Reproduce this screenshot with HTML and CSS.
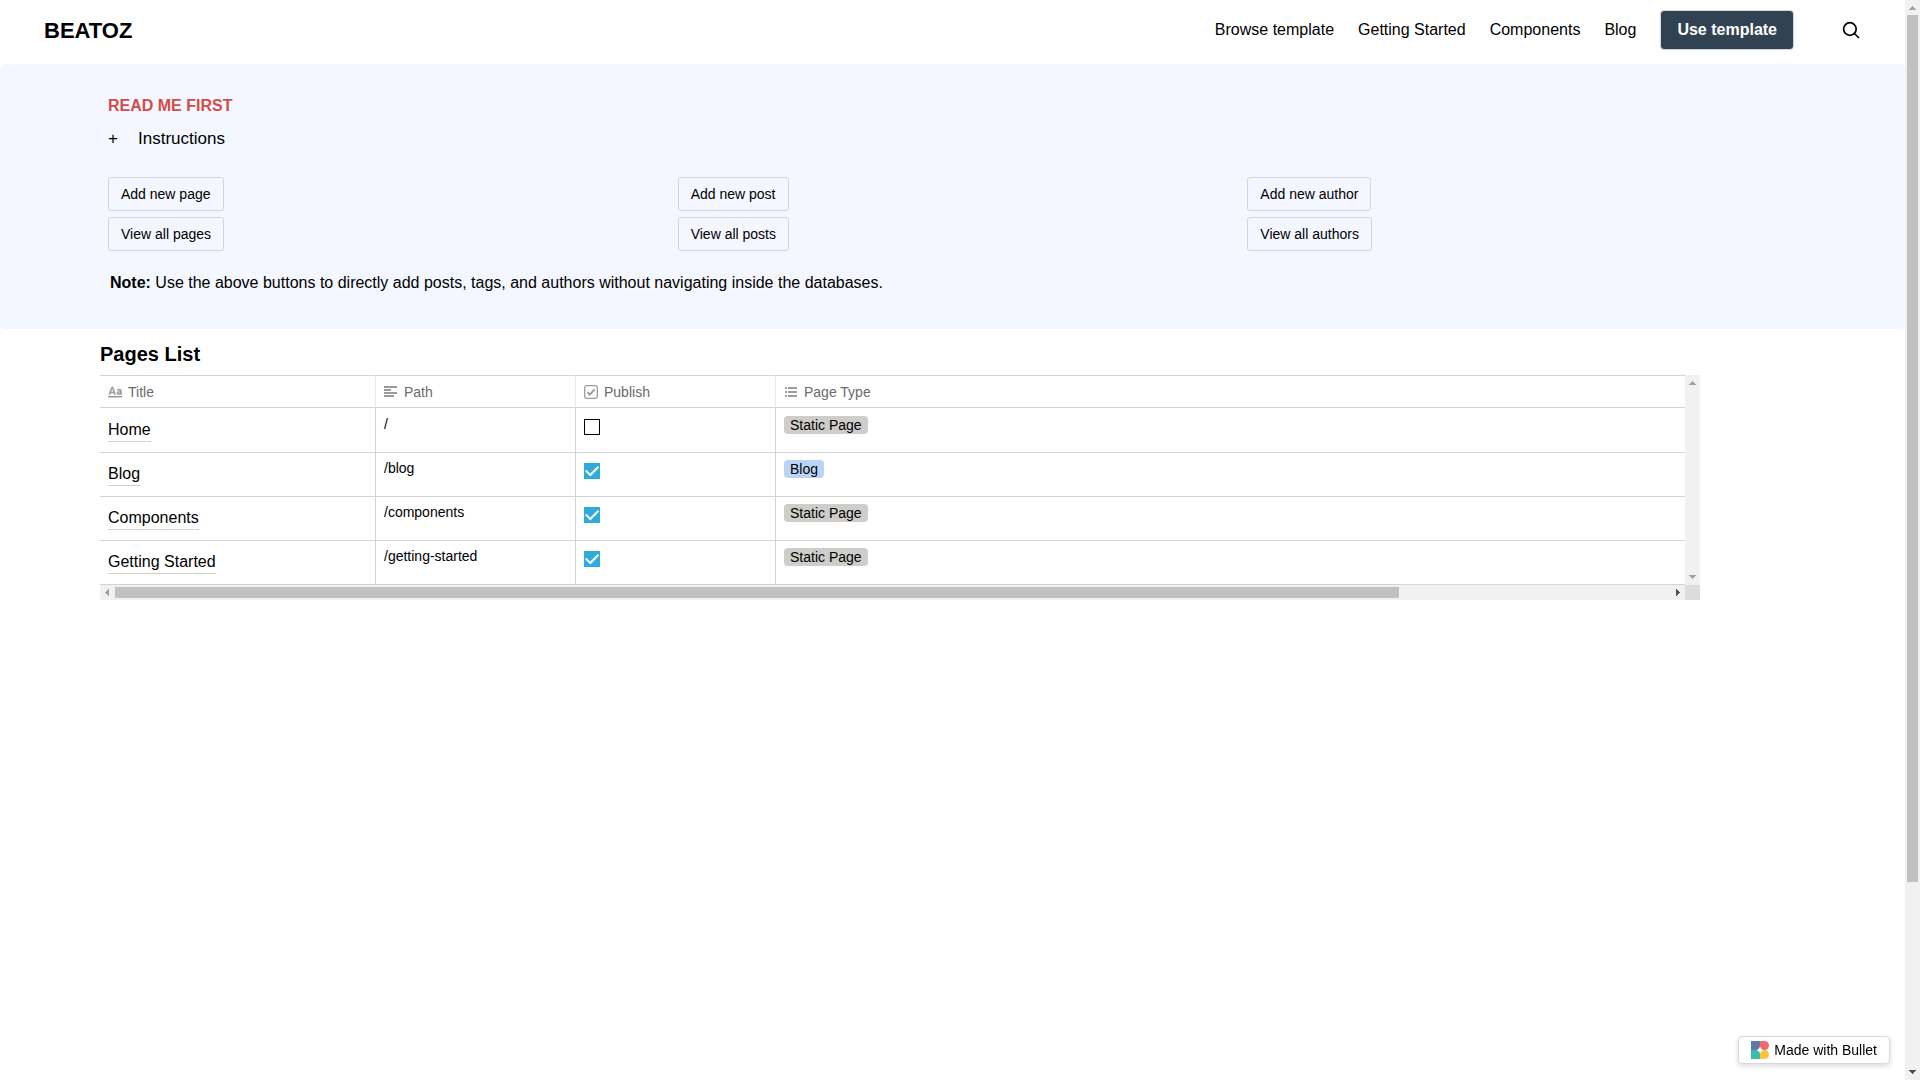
FILE: index.html
```html
<!DOCTYPE html>
<html lang="en">
<head>
<meta charset="utf-8">
<meta name="viewport" content="width=device-width, initial-scale=1">
<title>BEATOZ</title>
<link rel="stylesheet" href="styles.css">
</head>
<body>
<div class="page">
  <header class="site-header">
    <a class="brand" href="#">BEATOZ</a>
    <nav class="nav">
      <a href="#">Browse template</a>
      <a href="#">Getting Started</a>
      <a href="#">Components</a>
      <a href="#">Blog</a>
      <button class="cta" type="button">Use template</button>
      <button class="search" type="button" aria-label="Search">
        <svg width="18" height="18" viewBox="0 0 18 18" fill="none" stroke="currentColor" stroke-width="1.7"><circle cx="7.9" cy="8" r="6.3"/><path d="M12.4 12.5 17 17"/></svg>
      </button>
    </nav>
  </header>

  <main>
    <section class="hero">
      <h2 class="hero-title">READ ME FIRST</h2>
      <button class="toggle" type="button" aria-expanded="false"><span class="toggle-sign">+</span><span>Instructions</span></button>
      <div class="actions">
        <div class="action-group">
          <button class="btn" type="button">Add new page</button>
          <button class="btn" type="button">View all pages</button>
        </div>
        <div class="action-group">
          <button class="btn" type="button">Add new post</button>
          <button class="btn" type="button">View all posts</button>
        </div>
        <div class="action-group">
          <button class="btn" type="button">Add new author</button>
          <button class="btn" type="button">View all authors</button>
        </div>
      </div>
      <p class="note"><strong>Note:</strong> Use the above buttons to directly add posts, tags, and authors without navigating inside the databases.</p>
    </section>

    <section class="pages">
      <h2 class="pages-title">Pages List</h2>
      <div class="table-frame">
        <div class="table-view">
          <table class="pages-table">
            <colgroup><col class="col-title"><col class="col-path"><col class="col-publish"><col class="col-type"></colgroup>
            <thead>
              <tr>
                <th scope="col"><span class="head"><svg viewBox="0 0 14 14"><path stroke="currentColor" stroke-width=".6" d="M7.340 8.697a.81.81 0 0 0 .073.308.894.894 0 0 1 .066.232c0 .253-.224.484-.55.484-.299 0-.478-.138-.617-.577l-.37-1.090H2.573l-.377 1.083c-.144.444-.32.584-.62.584-.326 0-.547-.22-.547-.484 0-.076.016-.16.06-.274L3.370 2.460c.17-.46.46-.68.9-.68.44 0 .73.22.9.68zM2.900 7.100h2.700L4.270 3.100zM10.800 9.750c1 0 1.500-.6 1.600-.9v.3c0 .4.2.6.55.6.35 0 .55-.2.55-.6V6c0-1.200-.8-1.900-2.200-1.900-1 0-1.800.4-2.050 1-.2.5.1.75.4.75.7 0 .5-.85 1.600-.85.7 0 1.100.35 1.100 1v.4l-1.400.1c-1.300.1-2 .7-2 1.600 0 1 .75 1.650 1.850 1.650zm.3-.9c-.6 0-1-.3-1-.75s.35-.75 1-.8l1.250-.1v.4c0 .7-.55 1.250-1.250 1.250z"/><path d="M0 11h14v1.500H0z"/></svg>Title</span></th>
                <th scope="col"><span class="head"><svg viewBox="0 0 14 14"><path d="M0 1h13v2H0zM0 4h7v2H0zM0 7h13v2H0zM0 10h10v2H0z"/></svg>Path</span></th>
                <th scope="col"><span class="head"><svg viewBox="0 0 14 14"><rect x=".7" y=".7" width="12.6" height="12.6" rx="1.8" fill="none" stroke="currentColor" stroke-width="1.3"/><path d="m3.500 7.200 2.300 2.400 4.800-5.200" fill="none" stroke="currentColor" stroke-width="2"/></svg>Publish</span></th>
                <th scope="col"><span class="head"><svg viewBox="0 0 14 14"><path d="M1 2h2v2H1zM4 2h9v2H4zM1 6h2v2H1zM4 6h9v2H4zM1 10h2v2H1zM4 10h9v2H4z"/></svg>Page Type</span></th>
              </tr>
            </thead>
            <tbody>
              <tr>
                <td><a class="page-link" href="#">Home</a></td>
                <td>/</td>
                <td><input class="tick" type="checkbox" aria-label="Publish Home"></td>
                <td><span class="tag">Static Page</span></td>
              </tr>
              <tr>
                <td><a class="page-link" href="#">Blog</a></td>
                <td>/blog</td>
                <td><input class="tick" type="checkbox" aria-label="Publish Blog" checked></td>
                <td><span class="tag tag-blue">Blog</span></td>
              </tr>
              <tr>
                <td><a class="page-link" href="#">Components</a></td>
                <td>/components</td>
                <td><input class="tick" type="checkbox" aria-label="Publish Components" checked></td>
                <td><span class="tag">Static Page</span></td>
              </tr>
              <tr>
                <td><a class="page-link" href="#">Getting Started</a></td>
                <td>/getting-started</td>
                <td><input class="tick" type="checkbox" aria-label="Publish Getting Started" checked></td>
                <td><span class="tag">Static Page</span></td>
              </tr>
            </tbody>
          </table>
        </div>
        <div class="scrollbar scrollbar-y" aria-hidden="true">
          <svg class="arrow" viewBox="0 0 15 15"><path d="M4 10h7L7.500 6z"/></svg>
          <div class="track"></div>
          <svg class="arrow" viewBox="0 0 15 15"><path d="M4 5h7L7.500 9z"/></svg>
        </div>
        <div class="scrollbar scrollbar-x" aria-hidden="true">
          <svg class="arrow" viewBox="0 0 15 15"><path d="M9 4v7L5 7.500z"/></svg>
          <div class="track"><div class="thumb"></div></div>
          <svg class="arrow arrow-active" viewBox="0 0 15 15"><path d="M6 4v7l4-3.500z"/></svg>
        </div>
        <div class="scrollbar-corner"></div>
      </div>
    </section>
  </main>
</div>

<div class="scrollbar scrollbar-y" aria-hidden="true">
  <svg class="arrow" viewBox="0 0 15 15"><path d="M4 10h7L7.500 6z"/></svg>
  <div class="track"><div class="thumb"></div></div>
  <svg class="arrow arrow-active" viewBox="0 0 15 15"><path d="M4 5h7L7.500 9z"/></svg>
</div>

<a class="badge" href="#">
  <svg width="18" height="18" viewBox="0 0 18 18"><path fill="#5f77a9" d="M0 0h9v9H0z"/><path fill="#ef6a6c" d="M9 0h4.500a4.500 4.500 0 0 1 0 9H9z"/><path fill="#3bbdae" d="M0 9h9v9H0z"/><path fill="#fbc540" d="M9 9h4.500a4.500 4.500 0 0 1 0 9H9z"/><path fill="#fff" d="M9 5.500Q9.700 8.300 12.500 9 9.700 9.700 9 12.500 8.300 9.700 5.500 9 8.300 8.300 9 5.500z"/></svg>
  Made with Bullet
</a>
</body>
</html>
```
FILE: styles.css
```css
* { box-sizing: border-box; }

body {
  display: flex;
  height: 100vh;
  margin: 0;
  background: #fff;
  color: #000;
  font: 16px/24px "Liberation Sans", Arial, sans-serif;
}

button { font: inherit; color: inherit; background: none; border: 0; padding: 0; cursor: pointer; }
a { color: inherit; text-decoration: none; }
h2, p { margin: 0; }

.page {
  flex: 1;
  min-width: 0;
  overflow-x: hidden;
  overflow-y: auto;
}

/* Header */
.site-header {
  display: flex;
  align-items: center;
  justify-content: space-between;
  height: 64px;
  padding: 0 45px 4px 44px;
}
.brand { padding-top: 2px; font-size: 22px; font-weight: 700; }
.nav { display: flex; align-items: center; gap: 24px; }
.cta {
  height: 40px;
  padding: 0 16px;
  border: 1px solid #d5dadf;
  border-radius: 4px;
  background: #314252;
  color: #fff;
  font-weight: 700;
}
.search { display: flex; margin-left: 24px; }

/* Intro panel */
.hero {
  padding: 29px 108px 34px;
  border-radius: 5px;
  background: #f4f7ff;
}
.hero-title { color: #d44c47; font-size: 16px; line-height: 26px; }
.toggle {
  display: flex;
  gap: 20px;
  margin-top: 8px;
  font-size: 17px;
  line-height: 24px;
}
.toggle-sign { width: 10px; }
.actions {
  display: grid;
  grid-template-columns: repeat(3, 1fr);
  gap: 20px;
  margin-top: 26px;
}
.action-group { display: flex; flex-direction: column; align-items: flex-start; gap: 6px; }
.btn {
  height: 34px;
  padding: 0 12px;
  border: 1px solid #d3d5d9;
  border-radius: 3px;
  font-size: 14px;
}
.note { margin-top: 20px; padding-left: 2px; }

/* Pages table */
.pages { min-height: 979px; padding: 12px 100px 0; }
.pages-title { font-size: 20px; line-height: 26px; }
.table-frame {
  display: grid;
  grid-template-columns: minmax(0, 1fr) 15px;
  max-width: 1600px;
  margin-top: 8px;
}
.table-view { overflow-x: auto; }
.pages-table {
  width: 1920px;
  table-layout: fixed;
  border-collapse: separate;
  border-spacing: 0;
  font-size: 14px;
}
.col-title { width: 276px; }
.col-path, .col-publish { width: 200px; }
.pages-table th {
  height: 33px;
  padding: 0 8px;
  border-top: 1px solid #d4d4d4;
  border-bottom: 1px solid #d4d4d4;
  border-right: 1px solid #e9e9e9;
  color: #6b6b6b;
  font-weight: 400;
  text-align: left;
}
.head { display: flex; align-items: center; gap: 6px; }
.head svg { width: 14px; height: 14px; color: #9b9b9b; fill: #9b9b9b; }
.pages-table td {
  height: 44px;
  padding: 7px 8px 0;
  border-bottom: 1px solid #d4d4d4;
  border-right: 1px solid #d4d4d4;
  line-height: 16px;
  vertical-align: top;
}
.pages-table tbody tr:first-child td { height: 45px; padding-top: 8px; }
.pages-table th:last-child, .pages-table td:last-child { border-right: 0; }
.page-link {
  display: block;
  width: fit-content;
  margin-top: 3px;
  border-bottom: 1px solid #d0d0d0;
  font-size: 16px;
  line-height: 22px;
}
.tick {
  display: block;
  appearance: none;
  width: 16px;
  height: 16px;
  margin: 3px 0 0;
  border: 1px solid #000;
}
.tick:checked {
  border: 0;
  background: #2eaadc url("data:image/svg+xml,%3Csvg xmlns='http://www.w3.org/2000/svg' viewBox='0 0 16 16'%3E%3Cpath d='M1.700 7.500 6.300 12 14.500 3.800' fill='none' stroke='white' stroke-width='2'/%3E%3C/svg%3E");
}
.tag {
  display: block;
  width: fit-content;
  padding: 0 6px;
  border-radius: 4px;
  background: #cecdca;
  line-height: 18px;
}
.tag-blue { background: #bad4f7; }

/* Scrollbars */
.scrollbar { display: flex; background: #f1f1f1; }
.scrollbar-y { flex-direction: column; width: 15px; }
.scrollbar-x { height: 15px; }
.scrollbar-corner { background: #dcdcdc; }
.track { flex: 1; }
.thumb { background: #c1c1c1; }
.scrollbar-y .thumb { height: 82.6%; margin: 0 2px; }
.scrollbar-x .thumb { width: 82.6%; height: 11px; margin: 2px 0; }
.arrow { flex: none; width: 15px; height: 15px; fill: #a3a3a3; shape-rendering: crispEdges; }
.arrow-active { fill: #505050; }

/* Badge */
.badge {
  position: fixed;
  right: 30px;
  bottom: 16px;
  display: flex;
  align-items: center;
  gap: 5px;
  height: 28px;
  padding: 0 12px;
  border: 1px solid #d3dae6;
  border-radius: 4px;
  background: #fff;
  box-shadow: 0 2px 5px rgba(0, 0, 0, .15);
  font-size: 14px;
}
```
